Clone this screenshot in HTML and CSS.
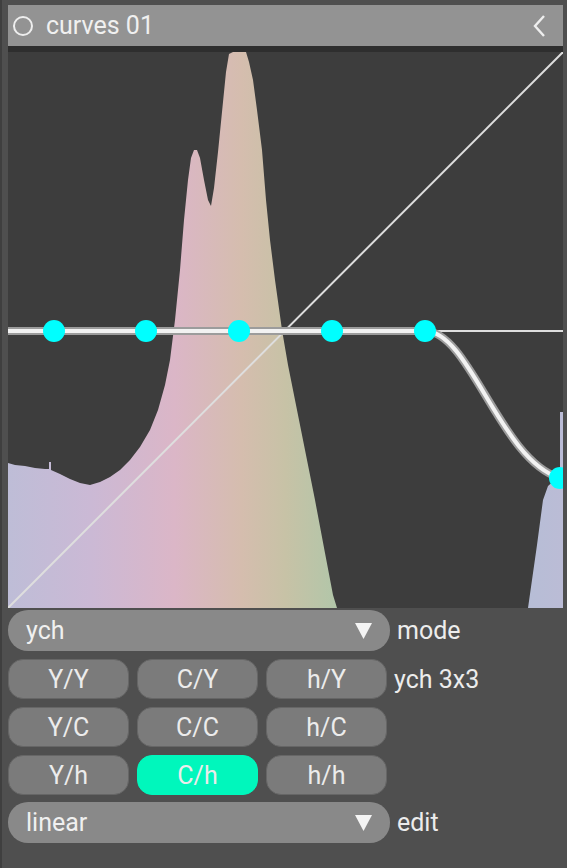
FILE: index.html
```html
<!DOCTYPE html>
<html>
<head>
<meta charset="utf-8">
<link rel="stylesheet" href="styles.css">
</head>
<body>
<div class="panel">
  <div class="header">
    <svg class="hicon" width="22" height="22" viewBox="0 0 22 22"><circle cx="11" cy="11" r="9" fill="none" stroke="#eeeeee" stroke-width="2"/></svg>
    <span class="title">curves 01</span>
    <svg class="chev" width="16" height="24" viewBox="0 0 16 24"><polyline points="12,2 3,12 12,22" fill="none" stroke="#eeeeee" stroke-width="2.4"/></svg>
  </div>
  <div class="strip"></div>
  <svg class="graph" width="555" height="556" viewBox="8 52 555 556">
    <defs>
      <linearGradient id="hue" gradientUnits="userSpaceOnUse" x1="8" y1="0" x2="563" y2="0">
        <stop offset="0" stop-color="#bebdd7"/>
        <stop offset="0.15" stop-color="#cbb9d5"/>
        <stop offset="0.3" stop-color="#dbb6c7"/>
        <stop offset="0.42" stop-color="#d5bdae"/>
        <stop offset="0.5" stop-color="#c7c2a6"/>
        <stop offset="0.59" stop-color="#b2c6a9"/>
        <stop offset="0.72" stop-color="#a9c8c4"/>
        <stop offset="0.86" stop-color="#b1bfd6"/>
        <stop offset="1" stop-color="#bbbcd6"/>
      </linearGradient>
    </defs>
    <rect x="8" y="52" width="555" height="556" fill="#3d3d3d"/>
    <polygon fill="url(#hue)" points="8,608 8,463 15,465 25,466 35,468 45,469 49,469 49,462 51,462 51,470 60,474 70,479 80,483 90,485 100,482 110,477 120,470 130,460 140,447 150,430 158,410 165,385 170,360 175,320 180,270 184,220 188,180 191,158 194,150 197,150 200,158 204,180 208,200 211,206 214,188 218,152 222,112 226,72 229,54 233,52 246,52 249,62 253,80 257,110 262,150 266,200 270,240 275,280 282,330 288,365 295,400 305,450 315,500 325,553 333,595 337,608"/>
    <polygon fill="url(#hue)" points="528,608 532,580 537,545 543,500 548,486 556,479 560,479 560,412 563,412 563,608"/>
    <line x1="8" y1="608" x2="563" y2="52" stroke="#dedede" stroke-width="2"/>
    <line x1="425" y1="331" x2="563" y2="331" stroke="#dedede" stroke-width="2"/>
    <path d="M8,331 H425 C470,331 500,460 560,478" fill="none" stroke="#9c9c9c" stroke-width="8"/>
    <path d="M8,331 H425 C470,331 500,460 560,478" fill="none" stroke="#f2f2f2" stroke-width="4"/>
    <g fill="#00ffff">
      <circle cx="54" cy="331" r="11"/>
      <circle cx="146" cy="331" r="11"/>
      <circle cx="239" cy="331" r="11"/>
      <circle cx="332" cy="331" r="11"/>
      <circle cx="425" cy="331" r="11"/>
      <circle cx="560" cy="478" r="11"/>
    </g>
  </svg>
  <div class="controls">
    <div class="row first">
      <div class="combo"><span>ych</span><svg class="tri" width="17" height="16" viewBox="0 0 17 16"><polygon points="0,0 17,0 8.5,16" fill="#f4f4f4"/></svg></div>
      <span class="label">mode</span>
    </div>
    <div class="row">
      <div class="btn">Y/Y</div><div class="btn">C/Y</div><div class="btn">h/Y</div>
      <span class="label">ych 3x3</span>
    </div>
    <div class="row">
      <div class="btn">Y/C</div><div class="btn">C/C</div><div class="btn">h/C</div>
    </div>
    <div class="row">
      <div class="btn">Y/h</div><div class="btn active">C/h</div><div class="btn">h/h</div>
    </div>
    <div class="row last">
      <div class="combo"><span>linear</span><svg class="tri" width="17" height="16" viewBox="0 0 17 16"><polygon points="0,0 17,0 8.5,16" fill="#f4f4f4"/></svg></div>
      <span class="label">edit</span>
    </div>
  </div>
</div>
</body>
</html>
```
FILE: styles.css
```css
html, body {
  margin: 0;
  padding: 0;
  background: #4f4f4f;
  font-family: Roboto, "Noto Sans", sans-serif;
  color: #ececec;
}
.panel {
  width: 567px;
  height: 868px;
  box-sizing: border-box;
  border-left: 2px solid #3f3f3f;
  padding: 5px 4px 0 6px;
  overflow: hidden;
}
.header {
  height: 41px;
  background: #939393;
  display: flex;
  align-items: center;
  padding: 0 0 0 4px;
}
.hicon { margin-right: 12px; }
.title {
  font-size: 25px;
  color: #f0f0f0;
  flex: 1;
}
.chev { margin-right: 15px; }
.strip {
  height: 6px;
  background: #2e2e2e;
}
.graph {
  display: block;
}
.controls {
  display: flex;
  flex-direction: column;
}
.row {
  display: flex;
  align-items: center;
  gap: 8px;
  margin-top: 8px;
}
.row.first { margin-top: 2px; }
.row.last { margin-top: 7px; }
.combo {
  width: 382px;
  height: 41px;
  box-sizing: border-box;
  border-radius: 20px;
  background: #898989;
  display: flex;
  align-items: center;
  justify-content: space-between;
  padding: 0 18px 0 18px;
  font-size: 25px;
  color: #f0f0f0;
}
.tri { display: block; }
.label {
  font-size: 25px;
  color: #ececec;
  margin-left: -1px;
}
.btn {
  width: 121px;
  height: 40px;
  box-sizing: border-box;
  border-radius: 15px;
  background: #7b7b7b;
  border: 1px solid #666;
  display: flex;
  align-items: center;
  justify-content: center;
  font-size: 25px;
  color: #ececec;
}
.btn.active {
  background: #00f7bc;
  border-color: #00f7bc;
}
```
